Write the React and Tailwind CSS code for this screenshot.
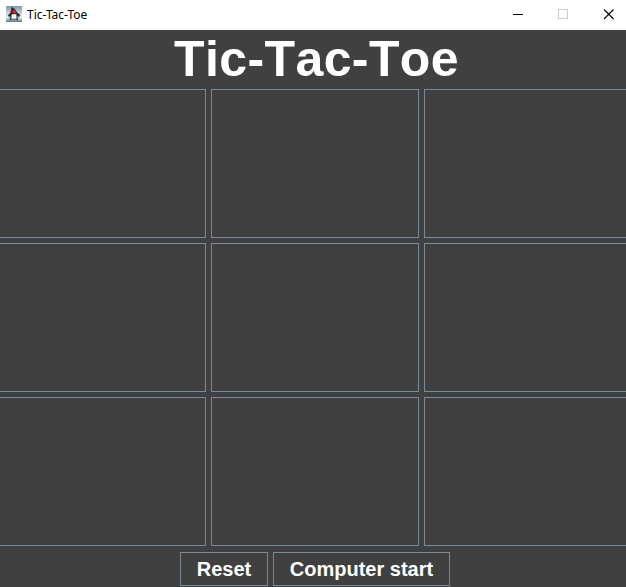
const CELLS = Array.from({ length: 9 }, (_, i) => i);

function JavaIcon() {
  return (
    <svg width="16" height="16" viewBox="0 0 16 16" className="shrink-0">
      <defs>
        <linearGradient id="sky" x1="0" y1="0" x2="0" y2="1">
          <stop offset="0" stopColor="#7f95a8" />
          <stop offset="0.55" stopColor="#dde4e9" />
          <stop offset="0.8" stopColor="#c3ced6" />
          <stop offset="1" stopColor="#4f7391" />
        </linearGradient>
      </defs>
      <rect width="16" height="16" fill="url(#sky)" />
      <path d="M5.5 1 C7.5 1.5 10 3.5 11 6.5 L14 8.5 L15 10.5 L13 11 L11.5 10 L12 14.5 L10 13.5 L5.5 13.5 L3.5 14.5 L4.5 10 L2.5 11.5 L1 10.5 L4.5 6.5 Z" fill="#2b2c2f" />
      <path d="M5.8 8.2 L10.3 8.2 L10.6 12.8 L5.2 12.8 Z" fill="#f6f6f6" />
      <path d="M0.5 10.5 L2 9.5 L3 11 L1.5 12.5 Z M13.5 9.5 L15.5 9.5 L15.5 12 L13.5 11.5 Z" fill="#f1f3f5" />
      <circle cx="8.3" cy="5.7" r="2" fill="#d4202a" />
    </svg>
  );
}

function TitleBar() {
  return (
    <header className="flex h-[30px] shrink-0 items-center bg-white pl-[6px]">
      <div className="flex h-full flex-1 items-center gap-[5px] pb-[2px]">
        <JavaIcon />
        <span className="pt-[2px] font-['Noto_Sans','Open_Sans',sans-serif] text-[12px] font-normal leading-[16px] text-black">
          Tic-Tac-Toe
        </span>
      </div>
      <svg width="104" height="30" viewBox="0 0 104 30" fill="none" className="mr-[11px]">
        <path d="M2 14.5H12" stroke="#000" />
        <rect x="47.5" y="9.5" width="9" height="9" stroke="#ccc" />
        <path d="M93 9.5L102.5 19M102.5 9.5L93 19" stroke="#000" strokeWidth="1.1" />
      </svg>
    </header>
  );
}

export default function App() {
  return (
    <div className="flex h-[587px] w-[626px] flex-col overflow-hidden bg-[#404040] font-['Liberation_Sans',Arial,sans-serif] font-bold text-white">
      <TitleBar />
      <h1 className="h-[59px] shrink-0 whitespace-nowrap pl-[174px] pt-px text-[50px] leading-[57px] tracking-[0.4px] [font-kerning:none]">
        Tic-Tac-Toe
      </h1>
      <main className="-ml-[2px] grid w-[634px] shrink-0 grid-cols-[208px_208px_208px] grid-rows-[149px_149px_149px] gap-[5px]">
        {CELLS.map((i) => (
          <button key={i} className="border border-[#7a8a99]" aria-label={`Cell ${i + 1}`} />
        ))}
      </main>
      <footer className="flex gap-[5px] pl-[180px] pt-[6px] text-[20px] leading-[32px]">
        <button className="h-[34px] w-[88px] border border-[#7a8a99]">Reset</button>
        <button className="h-[34px] w-[177px] whitespace-nowrap border border-[#7a8a99]">Computer start</button>
      </footer>
    </div>
  );
}
